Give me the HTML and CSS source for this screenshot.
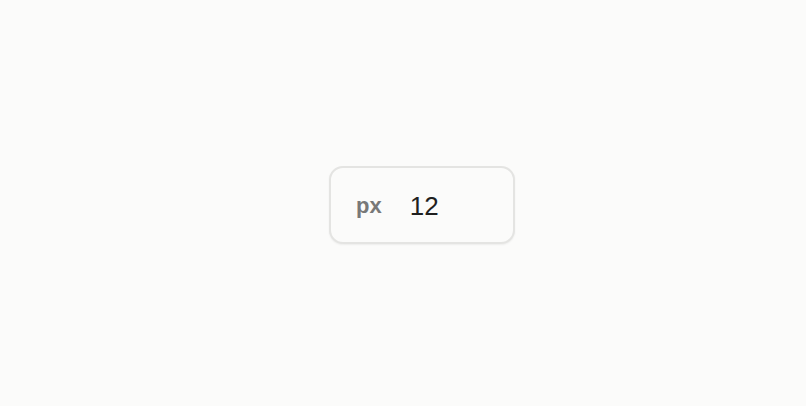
FILE: index.html
```html
<!DOCTYPE html>
<html>
<head>
<meta charset="utf-8">
<link rel="stylesheet" href="styles.css">
</head>
<body>
<div class="stage">
  <label class="field">
    <span class="unit">px</span>
    <span class="value">12</span>
  </label>
</div>
</body>
</html>
```
FILE: styles.css
```css
html, body {
  margin: 0;
  padding: 0;
  background: #fbfbfa;
}
.stage {
  width: 806px;
  height: 406px;
  display: flex;
  align-items: center;
  justify-content: center;
}
.field {
  box-sizing: border-box;
  width: 186px;
  height: 78px;
  margin-left: 38px;
  margin-top: 4px;
  border: 2px solid #e4e4e2;
  border-radius: 14px;
  background: #fbfbfa;
  box-shadow: 0 1px 2px rgba(0,0,0,0.06);
  display: flex;
  align-items: center;
  padding-left: 25px;
  padding-top: 2px;
  gap: 28px;
  font-family: "Liberation Sans", Arial, sans-serif;
}
.unit {
  font-size: 22px;
  font-weight: bold;
  color: #787878;
}
.value {
  font-size: 26px;
  color: #1f1f1f;
}
```
